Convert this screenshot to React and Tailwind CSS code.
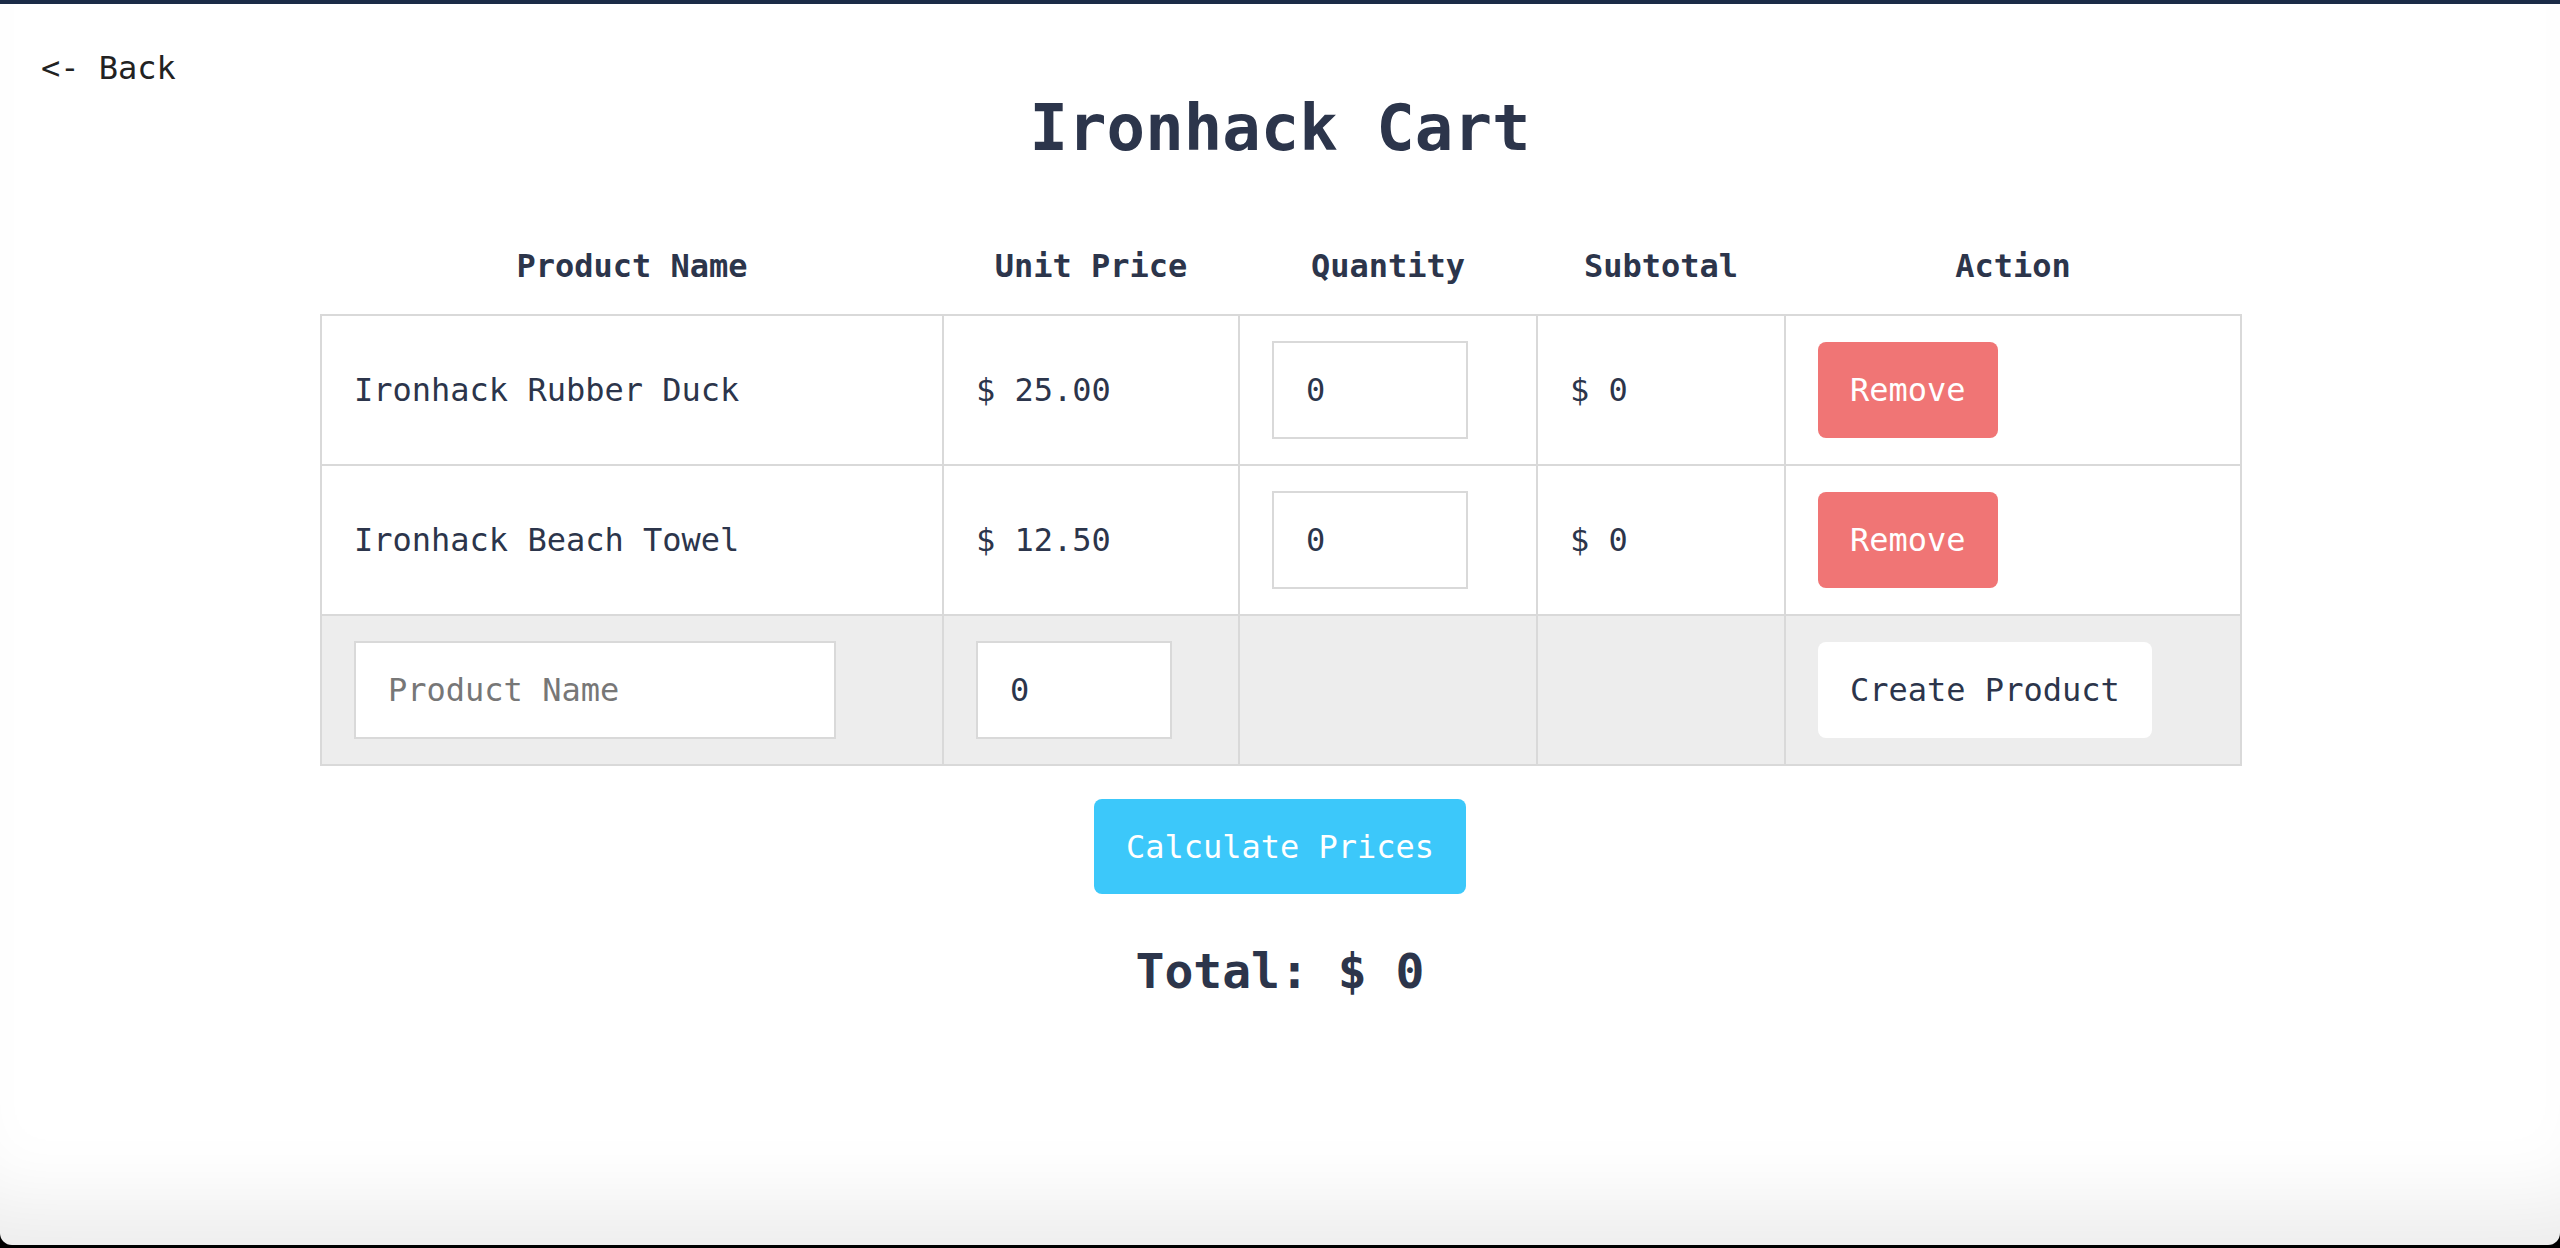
import React from 'react'

const products = [
  { name: 'Ironhack Rubber Duck', price: '25.00' },
  { name: 'Ironhack Beach Towel', price: '12.50' },
]

const cell = 'border-2 border-[#d9d9d9] px-8 py-[25px] align-middle'

export default function App() {
  return (
    <div className="h-screen flex flex-col bg-black font-['DejaVu_Sans_Mono',monospace] text-[#2c354b]">
      <div className="h-[4px] bg-[#1b2b47]" />

      <div className="flex-1 flex flex-col bg-white rounded-b-[12px] shadow-[inset_0_-90px_80px_-50px_rgba(0,0,0,0.08)]">
        {/* Back link */}
        <div className="pt-[44px] pl-[41px]">
          <a href="#" className="text-[32px] leading-[40px] text-[#222]">
            &lt;- Back
          </a>
        </div>

        <h1 className="mt-[8px] text-center text-[64px] leading-[64px] font-bold">
          Ironhack Cart
        </h1>

        {/* Cart table */}
        <div className="mt-[57px] flex justify-center pl-[2px]">
          <table className="table-fixed border-collapse text-[32px] leading-[48px]">
            <thead>
              <tr>
                <th className="w-[622px] pt-[25px] pb-6 font-bold text-center">Product Name</th>
                <th className="w-[296px] pt-[25px] pb-6 font-bold text-center">Unit Price</th>
                <th className="w-[298px] pt-[25px] pb-6 font-bold text-center">Quantity</th>
                <th className="w-[248px] pt-[25px] pb-6 font-bold text-center">Subtotal</th>
                <th className="w-[456px] pt-[25px] pb-6 font-bold text-center">Action</th>
              </tr>
            </thead>
            <tbody>
              {products.map((p) => (
                <tr key={p.name}>
                  <td className={cell}>{p.name}</td>
                  <td className={cell}>$ {p.price}</td>
                  <td className={cell}>
                    <input
                      type="number"
                      defaultValue={0}
                      className="block w-[196px] h-[98px] border-2 border-[#d9d9d9] bg-white px-8 text-[32px] outline-none"
                    />
                  </td>
                  <td className={cell}>$ 0</td>
                  <td className={cell}>
                    <button className="h-[96px] px-8 rounded-[8px] bg-[#f07575] text-white text-[32px]">
                      Remove
                    </button>
                  </td>
                </tr>
              ))}
              <tr className="bg-[#ededed]">
                <td className={cell}>
                  <input
                    type="text"
                    placeholder="Product Name"
                    className="block w-[482px] h-[98px] border-2 border-[#d9d9d9] bg-white px-8 text-[32px] outline-none placeholder:text-[#777]"
                  />
                </td>
                <td className={cell}>
                  <input
                    type="number"
                    defaultValue={0}
                    className="block w-[196px] h-[98px] border-2 border-[#d9d9d9] bg-white px-8 text-[32px] outline-none"
                  />
                </td>
                <td className={cell} />
                <td className={cell} />
                <td className={cell}>
                  <button className="h-[96px] px-8 rounded-[8px] bg-white text-[32px]">
                    Create Product
                  </button>
                </td>
              </tr>
            </tbody>
          </table>
        </div>

        <div className="mt-[33px] flex justify-center">
          <button className="h-[95px] px-8 rounded-[8px] bg-[#3cc8fa] text-white text-[32px]">
            Calculate Prices
          </button>
        </div>

        <h2 className="mt-[41px] text-center text-[48px] leading-[72px] font-bold">
          Total: $ 0
        </h2>
      </div>

      <div className="h-[3px]" />
    </div>
  )
}
